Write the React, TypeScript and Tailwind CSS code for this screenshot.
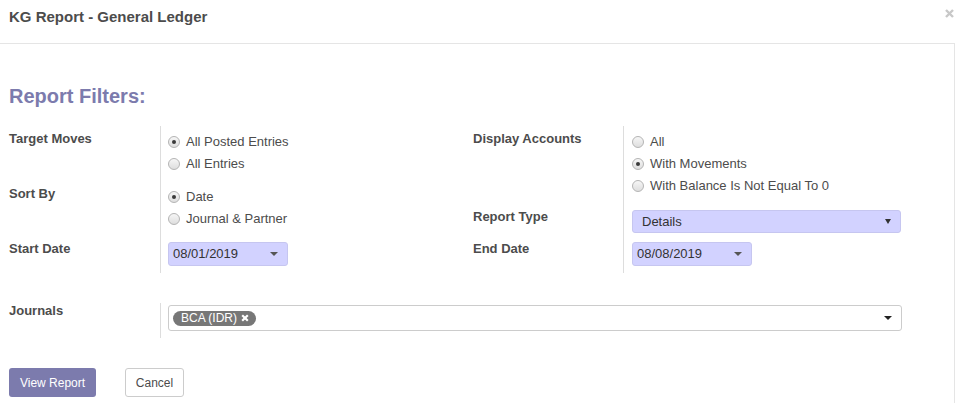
import React from "react";

const FONT = "font-['Liberation_Sans',Arial,sans-serif]";

function Radio({ checked, label }: { checked?: boolean; label: string }) {
  return (
    <div className="flex items-center h-[22px]">
      <span className="flex items-center justify-center w-[12px] h-[12px] rounded-full border border-[#b4b4b4] bg-linear-to-b from-[#f6f6f6] to-[#dedede]">
        {checked && <span className="w-[4px] h-[4px] rounded-full bg-[#3a3a3a]" />}
      </span>
      <span className="ml-[6px] text-[13px] text-[#4c4c4c]">{label}</span>
    </div>
  );
}

function Label({ children }: { children: React.ReactNode }) {
  return <div className="pt-[3px] leading-[20px] text-[13px] font-bold text-[#4c4c4c]">{children}</div>;
}

function DateSelect({ value }: { value: string }) {
  return (
    <div className="flex items-center justify-between w-[120px] h-[24px] pl-[4px] pr-[9px] rounded-[3px] bg-[#d2d2ff] border border-[#c6c6f0] text-[13px] text-[#333]">
      <span>{value}</span>
      <span className="w-0 h-0 border-l-[4px] border-r-[4px] border-t-[4px] border-l-transparent border-r-transparent border-t-[#555]" />
    </div>
  );
}

export default function App() {
  return (
    <div className={`w-[955px] h-[403px] bg-white overflow-hidden ${FONT}`}>
      {/* header */}
      <div className="relative h-[44px] border-b border-[#e5e5e5] pl-[9px] pt-[7px]">
        <h4 className="text-[15px] leading-[20px] font-bold text-[#4c4c4c]">KG Report - General Ledger</h4>
        <svg className="absolute left-[945px] top-[9px]" width="9" height="9" viewBox="0 0 9 9">
          <path d="M1 1L8 8M8 1L1 8" stroke="#c8c8c8" strokeWidth="2.4" />
        </svg>
      </div>

      {/* body */}
      <div className="h-[359px] border-r border-[#e5e5e5] pl-[9px] pt-[40px]">
        <div className="w-[901px]">
          <h2 className="text-[20px] leading-[24px] font-bold text-[#7c7bad]">Report Filters:</h2>

          <div className="mt-[18px] grid grid-cols-[464px_1fr]">
            {/* left half */}
            <div className="grid grid-cols-[151px_1fr]">
              <Label>Target Moves</Label>
              <div className="border-l border-[#dddddd] pl-[7px] pt-[5px] pb-[6px]">
                <Radio checked label="All Posted Entries" />
                <Radio label="All Entries" />
              </div>
              <Label>Sort By</Label>
              <div className="border-l border-[#dddddd] pl-[7px] pt-[5px] pb-[6px]">
                <Radio checked label="Date" />
                <Radio label="Journal & Partner" />
              </div>
              <Label>Start Date</Label>
              <div className="border-l border-[#dddddd] pl-[7px] pt-[6px] pb-[7px]">
                <DateSelect value="08/01/2019" />
              </div>
            </div>

            {/* right half */}
            <div className="grid grid-cols-[150px_1fr]">
              <Label>Display Accounts</Label>
              <div className="border-l border-[#dddddd] pl-[8px] pt-[5px] pb-[7px]">
                <Radio label="All" />
                <Radio checked label="With Movements" />
                <Radio label="With Balance Is Not Equal To 0" />
              </div>
              <Label>Report Type</Label>
              <div className="border-l border-[#dddddd] pl-[8px] pt-[6px] pb-[3px]">
                <div className="flex items-center justify-between w-[269px] h-[23px] pl-[9px] pr-[9px] rounded-[3px] bg-[#d2d2ff] border border-[#c6c6f0] text-[13px] text-[#333]">
                  <span>Details</span>
                  <svg width="6" height="5" viewBox="0 0 6 5">
                    <path d="M0 0H6L3 5Z" fill="#333" />
                  </svg>
                </div>
              </div>
              <Label>End Date</Label>
              <div className="border-l border-[#dddddd] pl-[8px] pt-[6px] pb-[7px]">
                <DateSelect value="08/08/2019" />
              </div>
            </div>
          </div>

          {/* journals */}
          <div className="mt-[30px] grid grid-cols-[151px_1fr]">
            <div className="leading-[16px] text-[13px] font-bold text-[#4c4c4c]">Journals</div>
            <div className="border-l border-[#dddddd] pl-[7px] pr-[8px] pt-[2px] pb-[7px]">
              <div className="flex items-center justify-between h-[26px] pl-[4px] pr-[9px] rounded-[3px] border border-[#cccccc]">
                <span className="flex items-center h-[15px] pl-[8px] pr-[7px] rounded-full bg-[#777777] text-[12px] text-white">
                  BCA (IDR)
                  <svg className="ml-[4px]" width="8" height="8" viewBox="0 0 8 8">
                    <path d="M1.2 1.2L6.8 6.8M6.8 1.2L1.2 6.8" stroke="#ffffff" strokeWidth="2.2" />
                  </svg>
                </span>
                <span className="w-0 h-0 border-l-[4px] border-r-[4px] border-t-[4px] border-l-transparent border-r-transparent border-t-[#222]" />
              </div>
            </div>
          </div>

          {/* buttons */}
          <div className="mt-[30px] flex">
            <button className="h-[29px] w-[87px] rounded-[3px] bg-[#7c7bad] text-[12px] text-white">View Report</button>
            <button className="ml-[29px] h-[29px] w-[59px] rounded-[3px] border border-[#cccccc] bg-white text-[12px] text-[#4c4c4c]">
              Cancel
            </button>
          </div>
        </div>
      </div>
    </div>
  );
}
